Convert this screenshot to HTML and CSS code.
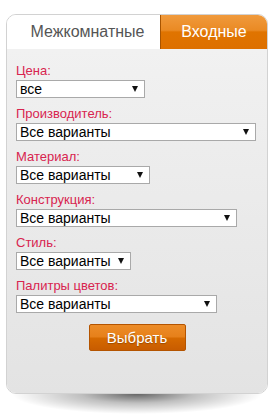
FILE: index.html
```html
<!DOCTYPE html>
<html lang="ru">
<head>
    <meta charset="UTF-8">
    <meta name="viewport" content="width=device-width, initial-scale=1.0">
    <title>Подбор дверей</title>
    <link rel="stylesheet" href="styles.css">
</head>
<body>
    <div class="filter">
        <div class="tabs">
            <a href="#" class="tab">Межкомнатные</a>
            <a href="#" class="tab tab-active">Входные</a>
        </div>

        <form class="filter-body">
            <div class="field">
                <label>Цена:</label>
                <div class="select" style="width: 129px;">
                    <select><option>все</option></select>
                </div>
            </div>
            <div class="field">
                <label>Производитель:</label>
                <div class="select" style="width: 240px;">
                    <select><option>Все варианты</option></select>
                </div>
            </div>
            <div class="field">
                <label>Материал:</label>
                <div class="select" style="width: 134px;">
                    <select><option>Все варианты</option></select>
                </div>
            </div>
            <div class="field">
                <label>Конструкция:</label>
                <div class="select" style="width: 221px;">
                    <select><option>Все варианты</option></select>
                </div>
            </div>
            <div class="field">
                <label>Стиль:</label>
                <div class="select" style="width: 115px;">
                    <select><option>Все варианты</option></select>
                </div>
            </div>
            <div class="field">
                <label>Палитры цветов:</label>
                <div class="select" style="width: 201px;">
                    <select><option>Все варианты</option></select>
                </div>
            </div>

            <div class="actions">
                <button type="button" class="btn">Выбрать</button>
            </div>
        </form>
    </div>
    <div class="filter-shadow"></div>
</body>
</html>
```

FILE: styles.css
```css
:root {
    --orange: #e07400;
    --label-color: #d8244f;
    --border-color: #d2d2d2;
}

body {
    margin: 0;
    padding: 0;
    font-family: Arial, 'Liberation Sans', sans-serif;
    background: #fff;
}

.filter {
    width: 262px;
    margin: 14px 0 0 6px;
    border: 1px solid var(--border-color);
    border-radius: 10px;
    overflow: hidden;
    box-sizing: border-box;
}

.tabs {
    display: flex;
    height: 34px;
    background: #fff;
}

.tab {
    display: flex;
    align-items: center;
    justify-content: center;
    font-size: 16px;
    color: #555;
    text-decoration: none;
}

.tab:first-child {
    flex: 1;
    padding-left: 8px;
}

.tab-active {
    width: 106px;
    color: #fff;
    border-left: 1px solid #a85400;
    background: linear-gradient(#f09a3c 0, #ea8a24 45%, #e07400 50%, #dd7000 100%);
}

.filter-body {
    margin: 0;
    padding: 14px 9px 42px;
    background: linear-gradient(#f1f1f1, #e3e3e3);
}

.field {
    margin-bottom: 8px;
}

.field label {
    display: block;
    font-size: 13px;
    line-height: 15px;
    color: var(--label-color);
    margin-bottom: 2px;
}

.select {
    position: relative;
    height: 18px;
    box-sizing: border-box;
    border: 1px solid #a9a9a9;
    background: #fff;
}

.select select {
    appearance: none;
    -webkit-appearance: none;
    display: block;
    width: 100%;
    height: 16px;
    margin: 0;
    padding: 0 0 0 3px;
    border: none;
    background: transparent;
    font-family: Arial, 'Liberation Sans', sans-serif;
    font-size: 14px;
    line-height: 16px;
    color: #000;
    outline: none;
}

.select::after {
    content: "";
    position: absolute;
    right: 6px;
    top: 5px;
    border-left: 3px solid transparent;
    border-right: 3px solid transparent;
    border-top: 6px solid #111;
    pointer-events: none;
}

.actions {
    display: flex;
    justify-content: center;
    padding-top: 3px;
}

.btn {
    width: 97px;
    height: 27px;
    border: 1px solid #b45400;
    border-radius: 2px;
    background: linear-gradient(#ec8c28 0, #e6801a 48%, #d66a00 52%, #c85c00 100%);
    color: #fff;
    font-family: Arial, 'Liberation Sans', sans-serif;
    font-size: 15px;
    text-shadow: 0 1px 1px rgba(0,0,0,0.25);
    cursor: pointer;
}

.filter-shadow {
    width: 250px;
    height: 20px;
    margin-left: 12px;
    background: radial-gradient(ellipse 50% 100% at 50% 0, rgba(0,0,0,0.6), rgba(0,0,0,0.25) 45%, rgba(0,0,0,0) 100%);
}
```
